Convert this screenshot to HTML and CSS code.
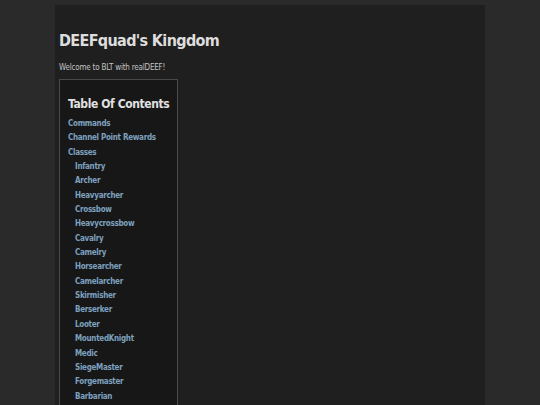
FILE: index.html
```html
<!DOCTYPE html>
<html>
<head>
<meta charset="utf-8">
<link rel="stylesheet" href="styles.css">
</head>
<body>
<div class="page">
  <h1 class="title">DEEFquad's Kingdom</h1>
  <p class="intro">Welcome to BLT with realDEEF!</p>
  <nav class="toc">
    <h2 class="toc-title">Table Of Contents</h2>
    <ul class="toc-list">
      <li><a href="#">Commands</a></li>
      <li><a href="#">Channel Point Rewards</a></li>
      <li><a href="#">Classes</a>
        <ul class="toc-sub">
          <li><a href="#">Infantry</a></li>
          <li><a href="#">Archer</a></li>
          <li><a href="#">Heavyarcher</a></li>
          <li><a href="#">Crossbow</a></li>
          <li><a href="#">Heavycrossbow</a></li>
          <li><a href="#">Cavalry</a></li>
          <li><a href="#">Camelry</a></li>
          <li><a href="#">Horsearcher</a></li>
          <li><a href="#">Camelarcher</a></li>
          <li><a href="#">Skirmisher</a></li>
          <li><a href="#">Berserker</a></li>
          <li><a href="#">Looter</a></li>
          <li><a href="#">MountedKnight</a></li>
          <li><a href="#">Medic</a></li>
          <li><a href="#">SiegeMaster</a></li>
          <li><a href="#">Forgemaster</a></li>
          <li><a href="#">Barbarian</a></li>
        </ul>
      </li>
    </ul>
  </nav>
</div>
</body>
</html>
```
FILE: styles.css
```css
html, body {
  margin: 0;
  padding: 0;
  background: #2a2a2a;
  height: 100%;
  overflow: hidden;
}
body {
  font-family: "DejaVu Sans Condensed", "DejaVu Sans", sans-serif;
  font-stretch: condensed;
  color: #d8d8d8;
}
.page {
  margin: 5px 0 0 55px;
  width: 422px;
  padding: 24px 4px 0 4px;
  background: #1f1f1f;
  min-height: 420px;
}
.title {
  margin: 0;
  font-size: 16px;
  letter-spacing: -0.65px;
  line-height: 24px;
  font-weight: bold;
  color: #dddddd;
}
.intro {
  margin: 9px 0 0 0;
  font-size: 8px;
  letter-spacing: -0.2px;
  line-height: 12px;
  color: #c4c4c4;
}
.toc {
  display: inline-block;
  vertical-align: top;
  margin-top: 5px;
  border: 1px solid #4a4a4a;
  background: #171717;
  padding: 14px 8px 0 8px;
  width: 101px;
  min-height: 340px;
}
.toc-title {
  margin: 0 0 3px 0;
  font-size: 12px;
  letter-spacing: -0.4px;
  line-height: 20px;
  font-weight: bold;
  white-space: nowrap;
  color: #e0e0e0;
}
.toc-list, .toc-sub {
  list-style: none;
  margin: 0;
  padding: 0;
}
.toc-sub {
  padding-left: 7px;
}
.toc-list li {
  font-size: 8px;
  letter-spacing: -0.3px;
  line-height: 14.35px;
  font-weight: bold;
  white-space: nowrap;
}
.toc-list a {
  color: #7da0bf;
  text-decoration: none;
}
```
